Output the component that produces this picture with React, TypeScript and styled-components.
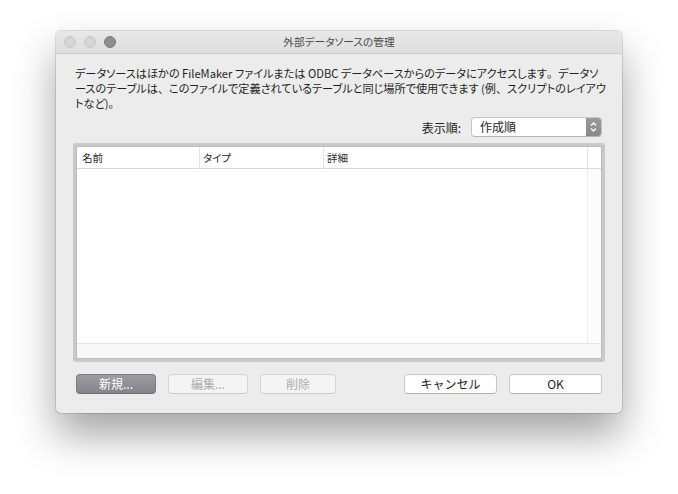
import styled, { createGlobalStyle } from 'styled-components';

const GlobalStyle = createGlobalStyle`
  html, body {
    margin: 0;
    padding: 0;
    background: #ffffff;
  }
  body {
    font-family: "Noto Sans CJK JP", "Liberation Sans", sans-serif;
    -webkit-font-smoothing: antialiased;
  }
`;

const columns = [
  { key: 'name', label: '名前' },
  { key: 'type', label: 'タイプ' },
  { key: 'detail', label: '詳細' },
];

function App() {
  return (
    <Page>
      <GlobalStyle />
      <Window>
        <TitleBar>
          <Lights>
            <Light />
            <Light />
            <Light $active />
          </Lights>
          <Title>外部データソースの管理</Title>
        </TitleBar>
        <Content>
          <Description>
            データソースはほかの FileMaker ファイルまたは ODBC データベースからのデータにアクセスします<Punct>。</Punct>データソ
            <br />
            ースのテーブルは<Punct>、</Punct>このファイルで定義されているテーブルと同じ場所で使用できます (例<Punct>、</Punct>スクリプトのレイアウ
            <br />
            トなど)<Punct>。</Punct>
          </Description>
          <SortRow>
            <SortLabel>表示順:</SortLabel>
            <Popup>
              <PopupValue>作成順</PopupValue>
              <Stepper>
                <svg width="7" height="12" viewBox="0 0 7 12">
                  <path d="M1 4.5 L3.5 2 L6 4.5" fill="none" stroke="#fff" strokeWidth="1.3" />
                  <path d="M1 7.5 L3.5 10 L6 7.5" fill="none" stroke="#fff" strokeWidth="1.3" />
                </svg>
              </Stepper>
            </Popup>
          </SortRow>
          <Table>
            {columns.map((c, i) => (
              <HeaderCell key={c.key} $first={i === 0}>
                {c.label}
              </HeaderCell>
            ))}
            <HeaderCell />
            <BodyArea />
            <ScrollTrack />
            <HScroll />
          </Table>
          <ButtonRow>
            <Group>
              <Button $variant="default" $width={80}>新規...</Button>
              <Button $variant="disabled" $width={80}>編集...</Button>
              <Button $variant="disabled" $width={76}>削除</Button>
            </Group>
            <Group>
              <Button $width={93}>キャンセル</Button>
              <Button $width={93}>OK</Button>
            </Group>
          </ButtonRow>
        </Content>
      </Window>
    </Page>
  );
}

export default App;

const Page = styled.div`
  padding: 31px 0 0 56px;
  min-height: 494px;
  box-sizing: border-box;
`;

const Window = styled.div`
  width: 566px;
  height: 382px;
  background: #ececec;
  border-radius: 5px;
  box-shadow: 0 0 0 1px rgba(0, 0, 0, 0.12), 0 22px 42px rgba(0, 0, 0, 0.36);
  display: flex;
  flex-direction: column;
  overflow: hidden;
`;

const TitleBar = styled.div`
  position: relative;
  height: 22px;
  flex: none;
  background: linear-gradient(#e8e8e8, #dedede);
  border-bottom: 1px solid #cdcdcd;
  display: flex;
  align-items: center;
  justify-content: center;
`;

const Lights = styled.div`
  position: absolute;
  left: 8px;
  top: 5px;
  display: flex;
  gap: 8px;
`;

const Light = styled.span<{ $active?: boolean }>`
  width: 12px;
  height: 12px;
  border-radius: 50%;
  box-sizing: border-box;
  background: ${(p) => (p.$active ? '#8d8d91' : '#d6d6d6')};
  border: 1px solid ${(p) => (p.$active ? '#7c7c80' : '#c6c6c6')};
`;

const Title = styled.div`
  font-size: 10.7px;
  font-feature-settings: "palt";
  color: #4a4a4a;
  line-height: 22px;
`;

const Content = styled.div`
  flex: 1;
  display: flex;
  flex-direction: column;
  padding: 12px 17px 19px 17px;
`;

const Description = styled.p`
  margin: 0 0 0 2px;
  height: 45px;
  font-size: 11.15px;
  line-height: 15px;
  font-feature-settings: "palt";
  color: #1e1e1e;
  white-space: nowrap;
`;

const Punct = styled.span`
  font-feature-settings: normal;
`;

const SortRow = styled.div`
  margin-top: 6px;
  height: 20px;
  display: flex;
  justify-content: flex-end;
  align-items: center;
  gap: 10px;
  padding-right: 3px;
`;

const SortLabel = styled.span`
  font-size: 12px;
  color: #1e1e1e;
`;

const Popup = styled.div`
  width: 131px;
  height: 20px;
  box-sizing: border-box;
  background: #fff;
  border: 1px solid #c6c6c6;
  border-bottom-color: #b4b4b4;
  border-radius: 4px;
  display: flex;
  align-items: stretch;
  overflow: hidden;
`;

const PopupValue = styled.span`
  flex: 1;
  padding-left: 8px;
  font-size: 12px;
  line-height: 18px;
  color: #1e1e1e;
`;

const Stepper = styled.span`
  width: 15px;
  background: linear-gradient(#9a9a9e, #88888c);
  display: flex;
  align-items: center;
  justify-content: center;
`;

const Table = styled.div`
  margin-top: 6px;
  height: 219px;
  box-sizing: border-box;
  border: 3px solid #c9c9c9;
  border-radius: 3px;
  box-shadow: inset 0 0 0 1px #bcbcbc;
  padding: 1px;
  display: grid;
  grid-template-columns: 122px 124px 1fr 14px;
  grid-template-rows: 22px 1fr 15px;
  background: #fff;
`;

const HeaderCell = styled.div<{ $first?: boolean }>`
  background: #fff;
  border-bottom: 1px solid #d6d6d6;
  border-left: ${(p) => (p.$first ? 'none' : '1px solid #e4e4e4')};
  font-size: 10.5px;
  font-feature-settings: "palt";
  line-height: 21px;
  padding-left: ${(p) => (p.$first ? '5px' : '3px')};
  color: #2a2a2a;
`;

const BodyArea = styled.div`
  grid-column: 1 / 4;
  background: #fff;
`;

const ScrollTrack = styled.div`
  background: #fcfcfc;
  border-left: 1px solid #ececec;
`;

const HScroll = styled.div`
  grid-column: 1 / 5;
  background: #f8f8f8;
  border-top: 1px solid #e6e6e6;
`;

const ButtonRow = styled.div`
  margin-top: 12px;
  display: flex;
  justify-content: space-between;
  padding: 0 3px;
`;

const Group = styled.div`
  display: flex;
  gap: 12px;
`;

const Button = styled.div<{ $variant?: 'default' | 'disabled'; $width: number }>`
  width: ${(p) => p.$width}px;
  height: 20px;
  box-sizing: border-box;
  border-radius: 4px;
  font-size: 12px;
  line-height: 18px;
  text-align: center;
  background: ${(p) =>
    p.$variant === 'default'
      ? 'linear-gradient(#9b9ba0, #84848a)'
      : p.$variant === 'disabled'
      ? '#f4f4f4'
      : '#ffffff'};
  border: 1px solid
    ${(p) => (p.$variant === 'default' ? '#7c7c81' : p.$variant === 'disabled' ? '#d4d4d4' : '#c8c8c8')};
  border-bottom-color: ${(p) => (p.$variant === 'default' ? '#6e6e73' : p.$variant === 'disabled' ? '#cccccc' : '#b2b2b2')};
  color: ${(p) => (p.$variant === 'default' ? '#ffffff' : p.$variant === 'disabled' ? '#adadad' : '#1e1e1e')};
`;
